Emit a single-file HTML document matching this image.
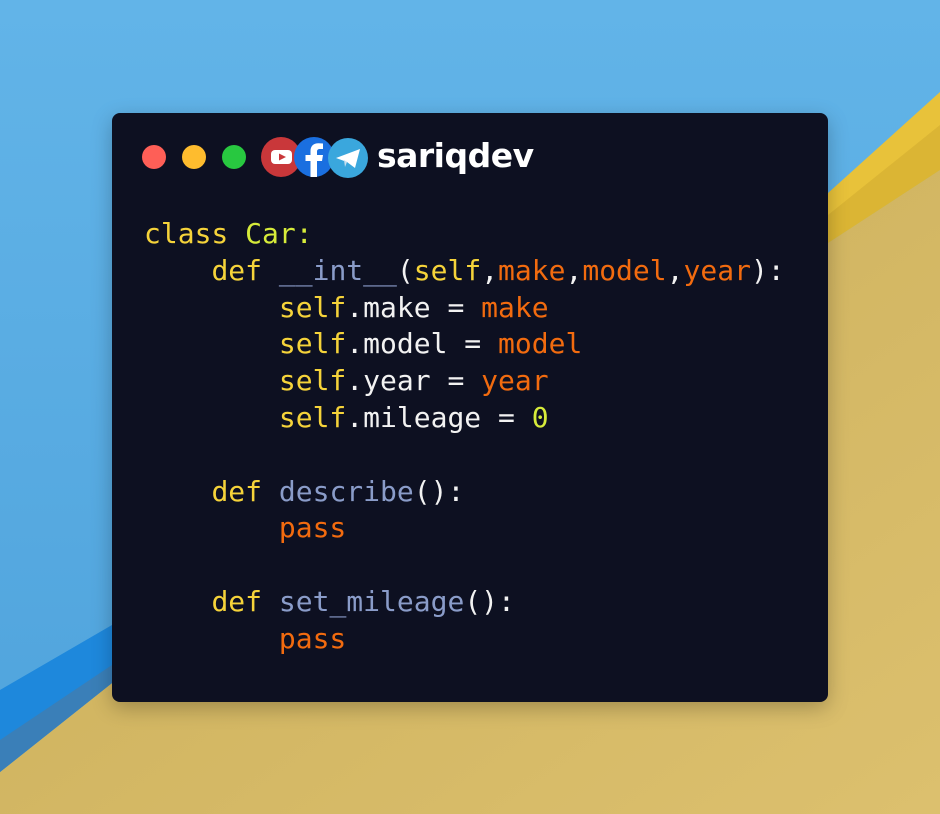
<!DOCTYPE html>
<html><head><meta charset="utf-8"><style>
html,body{margin:0;padding:0;width:940px;height:814px;overflow:hidden}
body{position:relative;font-family:"Liberation Sans",sans-serif}
.card{position:absolute;left:112px;top:113px;width:716px;height:589px;background:#0d1021;border-radius:8px;box-shadow:0 6px 20px rgba(0,0,0,.25)}
.dot{position:absolute;top:145px;width:24px;height:24px;border-radius:50%}
.brand{position:absolute;left:377px;top:136px;color:#fff;font-weight:bold;font-size:33px;font-family:"DejaVu Sans","Liberation Sans",sans-serif;letter-spacing:-0.5px}
pre{position:absolute;left:144px;top:216px;margin:0;font-family:"DejaVu Sans Mono","Liberation Mono",monospace;font-size:28px;line-height:36.8px;color:#f2f2f2}
.y{color:#f5d33a}.l{color:#d6eb3a}.o{color:#f26b0f}.b{color:#8a9cc9}.w{color:#f2f2f2}
</style></head><body>
<svg style="position:absolute;left:0;top:0" width="940" height="814">
<defs><linearGradient id="bg" x1="0" y1="0" x2="0" y2="1"><stop offset="0" stop-color="#62b4e8"/><stop offset="1" stop-color="#4fa3dc"/></linearGradient>
<linearGradient id="yg" x1="0" y1="0" x2="1" y2="1"><stop offset="0" stop-color="#c9ad58"/><stop offset="1" stop-color="#dcc06e"/></linearGradient></defs>
<rect width="940" height="814" fill="url(#bg)"/>
<polygon points="0,772 940,0 940,814 0,814" fill="none"/>
<polygon points="0,690 940,-60 940,92 0,820" fill="none"/>
<polygon points="0,772 112,683 828,243 940,170 940,814 0,814" fill="url(#yg)"/>
<polygon points="828,193 940,92 940,170 828,243" fill="#e8c23a"/>
<polygon points="828,215 940,125 940,170 828,243" fill="#dbb534"/>
<polygon points="0,690 112,625 112,683 0,772" fill="#1e88dc"/>
<polygon points="0,740 112,665 112,683 0,772" fill="#3a7fb8"/>
</svg>
<div class="card"></div>
<div class="dot" style="left:142px;background:#fe5f57"></div>
<div class="dot" style="left:182px;background:#febc2e"></div>
<div class="dot" style="left:222px;background:#28c840"></div>
<svg style="position:absolute;left:260px;top:135px" width="112" height="46" viewBox="0 0 112 46">
<circle cx="21" cy="22" r="20" fill="#c9373a"/>
<rect x="11" y="15" width="21" height="14" rx="4" fill="#fff"/>
<path d="M19 18.5 L26 22 L19 25.5Z" fill="#c9373a"/>
<circle cx="54" cy="22" r="20" fill="#1a6fe0"/>
<path d="M57 42 V26 H62 L63 20 H57 V16.5 C57 14.8 58 14 60 14 H63 V8.5 C61.5 8.3 60 8.2 58.5 8.2 C53.5 8.2 50.5 11 50.5 16 V20 H45.5 V26 H50.5 V42 Z" fill="#fff"/>
<circle cx="88" cy="23" r="20" fill="#3aa7dd"/>
<path d="M76 23 L100 14 L95 33 L87 27 Z" fill="#fff"/>
<path d="M87 27 L85 32 L84 25 Z" fill="#c8dfee"/>
</svg>
<div class="brand">sariqdev</div>
<pre><span class="y">class</span> <span class="l">Car:</span>
    <span class="y">def</span> <span class="b">__int__</span>(<span class="y">self</span>,<span class="o">make</span>,<span class="o">model</span>,<span class="o">year</span>):
        <span class="y">self</span>.make = <span class="o">make</span>
        <span class="y">self</span>.model = <span class="o">model</span>
        <span class="y">self</span>.year = <span class="o">year</span>
        <span class="y">self</span>.mileage = <span class="l">0</span>

    <span class="y">def</span> <span class="b">describe</span>():
        <span class="o">pass</span>

    <span class="y">def</span> <span class="b">set_mileage</span>():
        <span class="o">pass</span></pre>
</body></html>
